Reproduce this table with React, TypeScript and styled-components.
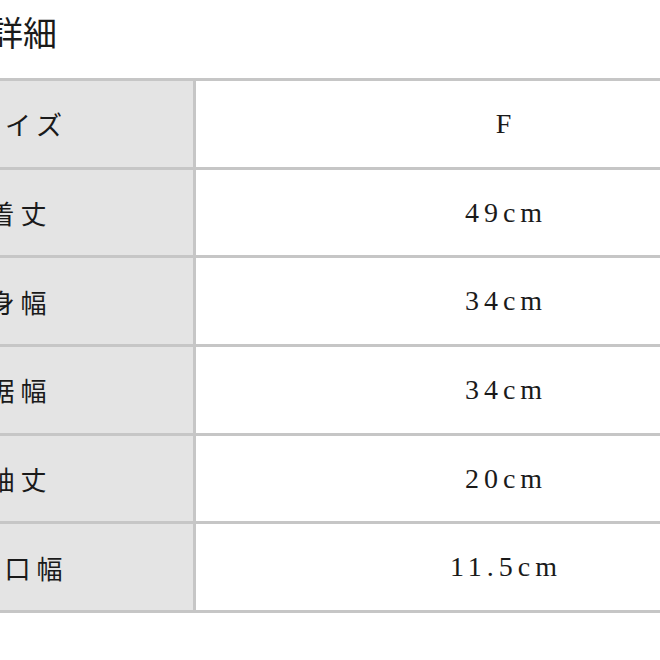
import { Fragment } from "react";
import styled, { createGlobalStyle } from "styled-components";

const GlobalStyle = createGlobalStyle`
  html, body {
    margin: 0;
    padding: 0;
    background: #ffffff;
    overflow: hidden;
  }
  body {
    font-family: "Liberation Serif", "Noto Sans CJK JP", serif;
    color: #1a1a1a;
  }
`

const Page = styled.div`
  width: 963px;
  margin-left: -152px;
  padding-top: 15px;
`

const Title = styled.h2`
  margin: 0 0 24px 0;
  padding-left: 141px;
  font-size: 34px;
  line-height: 39px;
  font-weight: 400;
  color: #1a1a1a;
`

const SpecTable = styled.div`
  display: grid;
  grid-template-columns: 345px 1fr;
  grid-auto-rows: 85.7px;
  gap: 3px;
  padding: 3px 0;
  background: #c6c6c6;
`

const LabelCell = styled.div`
  display: flex;
  align-items: center;
  justify-content: center;
  background: #e4e4e4;
  font-size: 26px;
  letter-spacing: 6px;
`

const ValueCell = styled.div`
  display: flex;
  align-items: center;
  justify-content: center;
  background: #ffffff;
  font-size: 28px;
  letter-spacing: 5px;
  padding-left: 5px;
`

const rows = [
  { label: "サイズ", value: "F" },
  { label: "着丈", value: "49cm" },
  { label: "身幅", value: "34cm" },
  { label: "裾幅", value: "34cm" },
  { label: "袖丈", value: "20cm" },
  { label: "袖口幅", value: "11.5cm" },
]

export default function App() {
  return (
    <>
      <GlobalStyle />
      <Page>
        <Title>詳細</Title>
        <SpecTable>
          {rows.map((row) => (
            <Fragment key={row.label}>
              <LabelCell>{row.label}</LabelCell>
              <ValueCell>{row.value}</ValueCell>
            </Fragment>
          ))}
        </SpecTable>
      </Page>
    </>
  )
}
